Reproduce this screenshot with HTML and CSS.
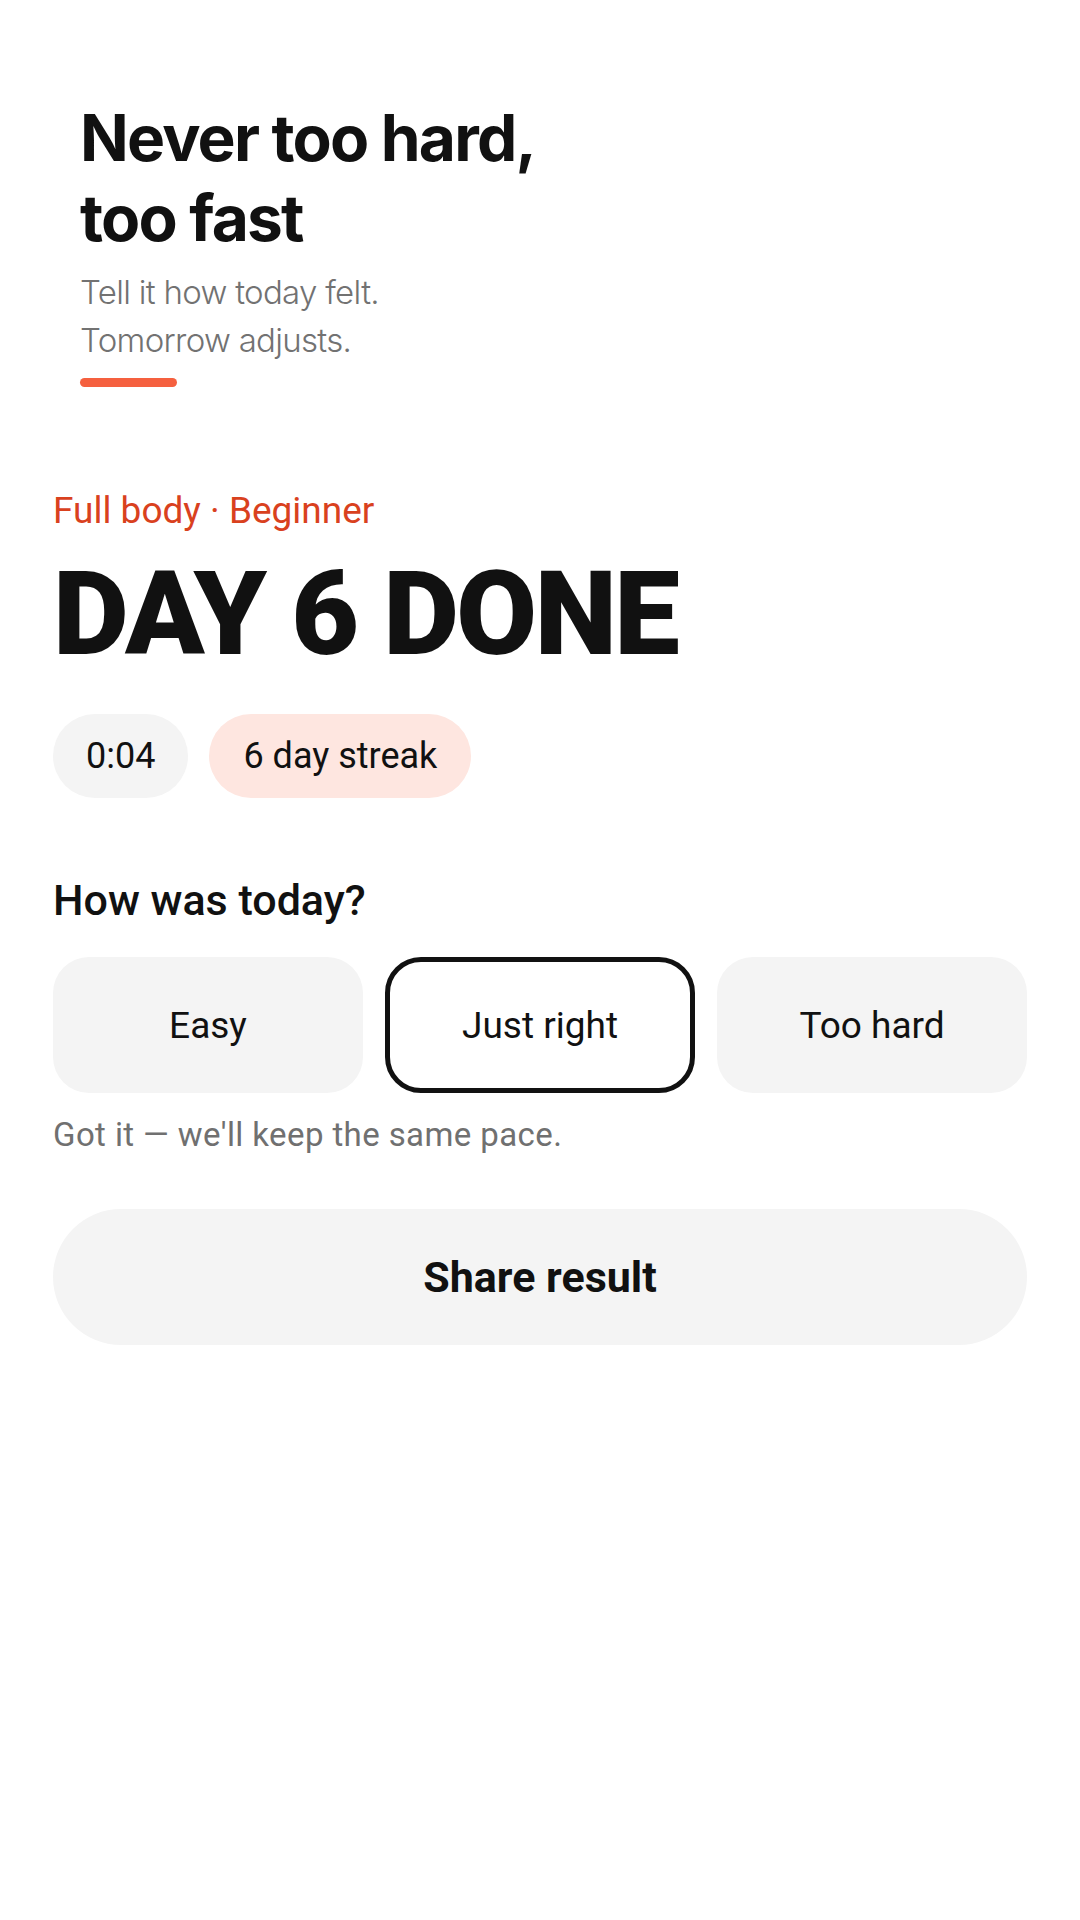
FILE: index.html
```html
<!DOCTYPE html>
<html lang="en">
<head>
<meta charset="utf-8">
<meta name="viewport" content="width=1080">
<title>Day 6 done</title>
<link rel="stylesheet" href="styles.css">
</head>
<body>
<main class="screen">
  <header class="intro">
    <h1 class="intro-title">Never too hard,<br>too fast</h1>
    <p class="intro-sub">Tell it how today felt.<br>Tomorrow adjusts.</p>
    <div class="intro-bar"></div>
  </header>

  <section class="result">
    <p class="result-meta">Full body · Beginner</p>
    <h2 class="result-title">DAY 6 DONE</h2>
    <div class="chips">
      <span class="chip">0:04</span>
      <span class="chip chip-streak">6 day streak</span>
    </div>

    <h3 class="question">How was today?</h3>
    <div class="options">
      <button class="option">Easy</button>
      <button class="option option-selected">Just right</button>
      <button class="option">Too hard</button>
    </div>
    <p class="feedback">Got it — we'll keep the same pace.</p>

    <button class="share">Share result</button>
  </section>
</main>
</body>
</html>
```

FILE: styles.css
```css
* { box-sizing: border-box; }

html, body {
  margin: 0;
  padding: 0;
  background: #ffffff;
}

body {
  font-family: Roboto, "Noto Sans", sans-serif;
  color: #111111;
}

.screen {
  width: 1080px;
  min-height: 1920px;
  padding: 98px 53px 0 53px;
}

.intro {
  padding-left: 27px;
}

.intro-title {
  margin: 0;
  font-family: Inter, "Noto Sans", sans-serif;
  font-weight: 700;
  font-size: 64px;
  line-height: 80px;
  letter-spacing: -1.8px;
  color: #111111;
}

.intro-sub {
  margin: 10px 0 0 0;
  font-family: Inter, "Noto Sans", sans-serif;
  font-weight: 300;
  font-size: 33px;
  line-height: 48px;
  letter-spacing: -0.7px;
  color: #727272;
}

.intro-bar {
  margin-top: 14px;
  width: 97px;
  height: 9px;
  border-radius: 5px;
  background: #f5603f;
}

.result {
  margin-top: 103px;
}

.result-meta {
  margin: 0;
  font-size: 37px;
  font-weight: 400;
  line-height: 42px;
  color: #d9411e;
}

.result-title {
  margin: 24px 0 0 0;
  font-size: 117px;
  font-weight: 900;
  line-height: 117px;
  letter-spacing: -2.5px;
  color: #111111;
}

.chips {
  display: flex;
  gap: 21px;
  margin-top: 41px;
}

.chip {
  display: inline-block;
  padding: 21px 33px;
  font-size: 36px;
  line-height: 42px;
  border-radius: 42px;
  background: #f4f4f4;
  color: #111111;
}

.chip-streak {
  background: #fee6e0;
  padding: 21px 34px;
}

.question {
  margin: 76px 0 0 0;
  font-size: 43px;
  font-weight: 500;
  line-height: 52px;
  color: #111111;
}

.options {
  display: grid;
  grid-template-columns: repeat(3, 1fr);
  gap: 22px;
  margin-top: 31px;
}

.option {
  height: 136px;
  border: none;
  border-radius: 36px;
  background: #f4f4f4;
  font-family: Roboto, "Noto Sans", sans-serif;
  font-size: 37px;
  font-weight: 400;
  color: #111111;
  padding: 0;
}

.option-selected {
  background: #ffffff;
  border: 5px solid #111111;
}

.feedback {
  margin: 23px 0 0 0;
  font-size: 33px;
  line-height: 38px;
  letter-spacing: 0.4px;
  color: #707070;
}

.share {
  display: block;
  width: 100%;
  height: 136px;
  margin-top: 55px;
  border: none;
  border-radius: 68px;
  background: #f4f4f4;
  font-family: Roboto, "Noto Sans", sans-serif;
  font-size: 43px;
  font-weight: 700;
  color: #111111;
}
```
